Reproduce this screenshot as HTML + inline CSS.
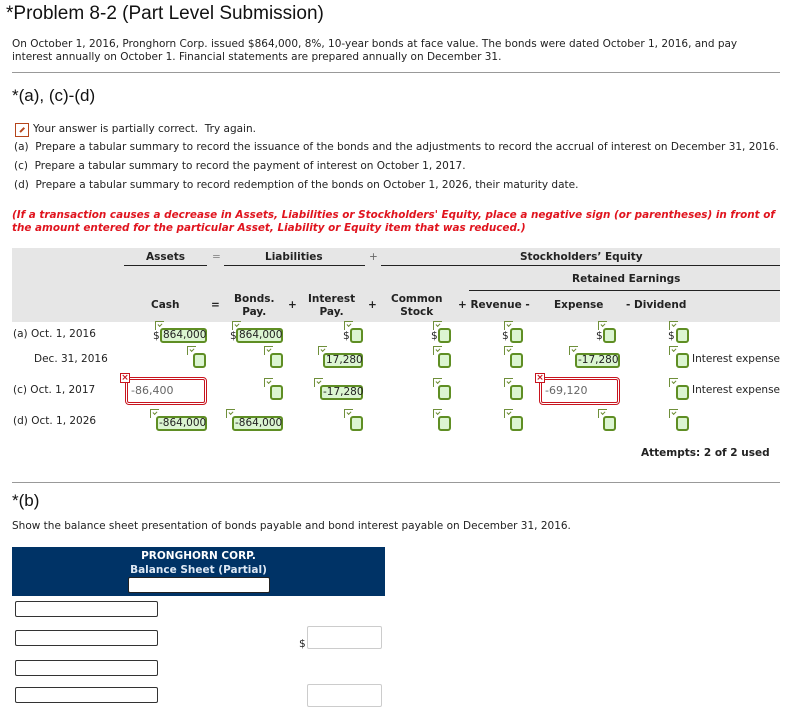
<!DOCTYPE html>
<html><head><meta charset="utf-8">
<style>
*{margin:0;padding:0;box-sizing:border-box}
body{width:786px;height:721px;background:#fff;position:relative;font-family:"DejaVu Sans",Verdana,sans-serif;font-size:10.5px;color:#222;overflow:hidden}
.a{position:absolute;white-space:nowrap}
.b{font-weight:bold}
.hd{font-family:"Liberation Sans",Arial,sans-serif;color:#111}
.ck{position:absolute;width:9px;height:9px;border:1px solid #6f8f3a;border-right:none;border-bottom:none;background:#fff}
.ck:after{content:"";position:absolute;left:2px;top:1px;width:3px;height:2px;border-left:1px solid #6a8a30;border-bottom:1px solid #6a8a30;transform:rotate(-45deg)}
.bx{position:absolute;border:2px solid #5f8e24;border-radius:3px;background:#dcf5d2;height:15px;font-size:10.5px;line-height:11px;padding-left:1px;text-align:left}
.e{width:13px}
.rd{position:absolute;border:3px double #c8141e;border-radius:4px;background:#fff;height:28px;font-size:11px;color:#666;line-height:22px;padding-left:3px}
.x{position:absolute;width:10px;height:10px;border:1px solid #c8141e;background:#fff;color:#c8141e;font-size:9px;line-height:8px;text-align:center;font-weight:bold}
.ln{position:absolute;height:1px;background:#222}
.in{position:absolute;border:1px solid #333;border-radius:2px;background:#fff;height:16px}
.gi{position:absolute;border:1px solid #ccc;border-radius:2px;background:#fff}
</style></head><body>
<div class="a hd" style="left:6px;top:3px;font-size:19px">*Problem 8-2 (Part Level Submission)</div>
<div class="a" style="left:12px;top:38px;line-height:13px">On October 1, 2016, Pronghorn Corp. issued $864,000, 8%, 10-year bonds at face value. The bonds were dated October 1, 2016, and pay<br>interest annually on October 1. Financial statements are prepared annually on December 31.</div>
<div class="a" style="left:12px;top:72px;width:768px;height:1px;background:#999"></div>
<div class="a hd" style="left:12px;top:86px;font-size:17px">*(a), (c)-(d)</div>
<div class="a" style="left:15px;top:123px;width:14px;height:14px;border:1px solid #b5451b"></div>
<div class="a" style="left:19px;top:129px;width:6px;height:1.5px;background:#b5451b;transform:rotate(-45deg)"></div>
<div class="a" style="left:33px;top:123px">Your answer is partially correct.&nbsp; Try again.</div>
<div class="a" style="left:14px;top:141px">(a)&nbsp; Prepare a tabular summary to record the issuance of the bonds and the adjustments to record the accrual of interest on December 31, 2016.</div>
<div class="a" style="left:14px;top:160px">(c)&nbsp; Prepare a tabular summary to record the payment of interest on October 1, 2017.</div>
<div class="a" style="left:14px;top:179px">(d)&nbsp; Prepare a tabular summary to record redemption of the bonds on October 1, 2026, their maturity date.</div>
<div class="a b" style="left:12px;top:209px;color:#e0141e;font-style:italic;line-height:13px;font-size:10.4px">(If a transaction causes a decrease in Assets, Liabilities or Stockholders' Equity, place a negative sign (or parentheses) in front of<br>the amount entered for the particular Asset, Liability or Equity item that was reduced.)</div>

<div class="a" style="left:12px;top:248px;width:768px;height:74px;background:#e6e6e6"></div>
<div class="a b" style="left:146px;top:251px">Assets</div>
<div class="ln" style="left:124px;top:265px;width:83px"></div>
<div class="a" style="left:212px;top:251px;color:#888">=</div>
<div class="a b" style="left:265px;top:251px">Liabilities</div>
<div class="ln" style="left:224px;top:265px;width:141px"></div>
<div class="a" style="left:369px;top:251px;color:#666">+</div>
<div class="a b" style="left:520px;top:251px">Stockholders’ Equity</div>
<div class="ln" style="left:381px;top:265px;width:399px"></div>
<div class="a b" style="left:572px;top:273px">Retained Earnings</div>
<div class="ln" style="left:469px;top:290px;width:311px"></div>
<div class="a b" style="left:151px;top:299px">Cash</div>
<div class="a b" style="left:211px;top:299px">=</div>
<div class="a b" style="left:234px;top:293px;text-align:center;line-height:13px">Bonds.<br>Pay.</div>
<div class="a b" style="left:288px;top:299px">+</div>
<div class="a b" style="left:308px;top:293px;text-align:center;line-height:13px">Interest<br>Pay.</div>
<div class="a b" style="left:368px;top:299px">+</div>
<div class="a b" style="left:391px;top:293px;text-align:center;line-height:13px">Common<br>Stock</div>
<div class="a b" style="left:458px;top:299px">+ Revenue -</div>
<div class="a b" style="left:554px;top:299px">Expense</div>
<div class="a b" style="left:626px;top:299px">- Dividend</div>

<div class="a" style="left:13px;top:328px">(a) Oct. 1, 2016</div>
<div class="a" style="left:34px;top:353px">Dec. 31, 2016</div>
<div class="a" style="left:13px;top:384px">(c) Oct. 1, 2017</div>
<div class="a" style="left:13px;top:415px">(d) Oct. 1, 2026</div>

<div class="a" style="left:153px;top:330px">$</div><div class="ck" style="left:155px;top:321px"></div><div class="bx" style="left:160px;top:328px;width:47px">864,000</div>
<div class="a" style="left:230px;top:330px">$</div><div class="ck" style="left:232px;top:321px"></div><div class="bx" style="left:236px;top:328px;width:47px">864,000</div>
<div class="a" style="left:343px;top:330px">$</div><div class="ck" style="left:344px;top:321px"></div><div class="bx e" style="left:350px;top:328px"></div>
<div class="a" style="left:431px;top:330px">$</div><div class="ck" style="left:433px;top:321px"></div><div class="bx e" style="left:438px;top:328px"></div>
<div class="a" style="left:502px;top:330px">$</div><div class="ck" style="left:504px;top:321px"></div><div class="bx e" style="left:510px;top:328px"></div>
<div class="a" style="left:596px;top:330px">$</div><div class="ck" style="left:598px;top:321px"></div><div class="bx e" style="left:603px;top:328px"></div>
<div class="a" style="left:668px;top:330px">$</div><div class="ck" style="left:669px;top:321px"></div><div class="bx e" style="left:676px;top:328px"></div>

<div class="ck" style="left:187px;top:346px"></div><div class="bx e" style="left:193px;top:353px"></div>
<div class="ck" style="left:264px;top:346px"></div><div class="bx e" style="left:270px;top:353px"></div>
<div class="ck" style="left:318px;top:346px"></div><div class="bx" style="left:323px;top:353px;width:40px">17,280</div>
<div class="ck" style="left:433px;top:346px"></div><div class="bx e" style="left:438px;top:353px"></div>
<div class="ck" style="left:504px;top:346px"></div><div class="bx e" style="left:510px;top:353px"></div>
<div class="ck" style="left:569px;top:346px"></div><div class="bx" style="left:575px;top:353px;width:45px">-17,280</div>
<div class="ck" style="left:669px;top:346px"></div><div class="bx e" style="left:676px;top:353px"></div>
<div class="a" style="left:692px;top:353px">Interest expense</div>

<div class="rd" style="left:125px;top:377px;width:82px">-86,400</div><div class="x" style="left:120px;top:373px">×</div>
<div class="ck" style="left:264px;top:378px"></div><div class="bx e" style="left:270px;top:385px"></div>
<div class="ck" style="left:314px;top:378px"></div><div class="bx" style="left:320px;top:385px;width:43px">-17,280</div>
<div class="ck" style="left:433px;top:378px"></div><div class="bx e" style="left:438px;top:385px"></div>
<div class="ck" style="left:504px;top:378px"></div><div class="bx e" style="left:510px;top:385px"></div>
<div class="rd" style="left:539px;top:377px;width:81px">-69,120</div><div class="x" style="left:535px;top:373px">×</div>
<div class="ck" style="left:669px;top:378px"></div><div class="bx e" style="left:676px;top:385px"></div>
<div class="a" style="left:692px;top:384px">Interest expense</div>

<div class="ck" style="left:150px;top:409px"></div><div class="bx" style="left:156px;top:416px;width:51px">-864,000</div>
<div class="ck" style="left:226px;top:409px"></div><div class="bx" style="left:232px;top:416px;width:51px">-864,000</div>
<div class="ck" style="left:344px;top:409px"></div><div class="bx e" style="left:350px;top:416px"></div>
<div class="ck" style="left:433px;top:409px"></div><div class="bx e" style="left:438px;top:416px"></div>
<div class="ck" style="left:504px;top:409px"></div><div class="bx e" style="left:510px;top:416px"></div>
<div class="ck" style="left:598px;top:409px"></div><div class="bx e" style="left:603px;top:416px"></div>
<div class="ck" style="left:669px;top:409px"></div><div class="bx e" style="left:676px;top:416px"></div>

<div class="a b" style="left:641px;top:447px">Attempts: 2 of 2 used</div>
<div class="a" style="left:12px;top:482px;width:768px;height:1px;background:#999"></div>
<div class="a hd" style="left:12px;top:491px;font-size:17px">*(b)</div>
<div class="a" style="left:12px;top:520px">Show the balance sheet presentation of bonds payable and bond interest payable on December 31, 2016.</div>

<div class="a" style="left:12px;top:547px;width:373px;height:49px;background:#003366"></div>
<div class="a b" style="left:12px;top:549px;width:373px;text-align:center;color:#fff;line-height:14px">PRONGHORN CORP.<br><span style="color:#dde8f4">Balance Sheet (Partial)</span></div>
<div class="in" style="left:128px;top:577px;width:142px;border-color:#222"></div>
<div class="in" style="left:15px;top:601px;width:143px"></div>
<div class="in" style="left:15px;top:630px;width:143px"></div>
<div class="in" style="left:15px;top:660px;width:143px"></div>
<div class="in" style="left:15px;top:687px;width:143px"></div>
<div class="a" style="left:299px;top:638px">$</div>
<div class="gi" style="left:307px;top:626px;width:75px;height:23px"></div>
<div class="gi" style="left:307px;top:684px;width:75px;height:23px"></div>
</body></html>
